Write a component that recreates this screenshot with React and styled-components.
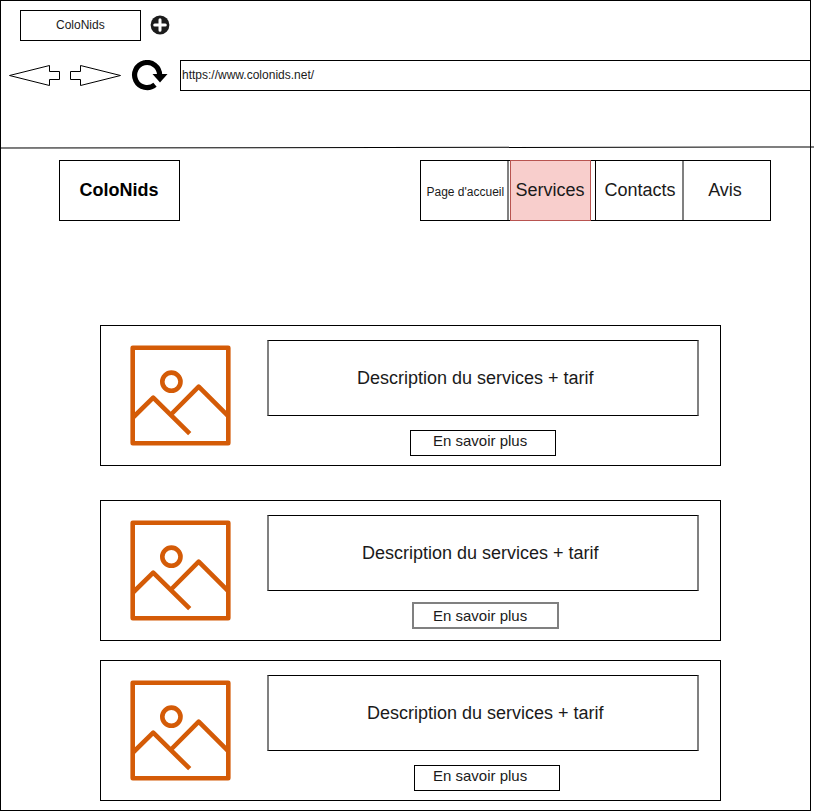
import React from "react";
import styled, { createGlobalStyle } from "styled-components";

const GlobalStyle = createGlobalStyle`
  *, *::before, *::after { box-sizing: border-box; }
  body {
    margin: 0;
    background: #fff;
    color: #1a1a1a;
    font-family: "Liberation Sans", Arial, Helvetica, sans-serif;
  }
  svg { display: block; flex: none; }
`;

const Window = styled.div`
  width: 811px;
  height: 811px;
  border: 1px solid #000;
`;

const TabBar = styled.div`
  display: flex;
  align-items: flex-start;
  gap: 9px;
  padding: 9px 0 0 19px;
`;

const Tab = styled.div`
  width: 121px;
  height: 31px;
  border: 1px solid #000;
  padding: 7px 0 0 35px;
  font-size: 12px;
  line-height: 14px;
`;

const AddTab = styled.div`
  padding-top: 5px;
`;

const Toolbar = styled.div`
  display: flex;
  height: 50px;
  padding-top: 19px;
`;

const AddressBar = styled.div`
  flex: 1;
  height: 31px;
  border: 1px solid #000;
  border-right: 0;
  padding: 7px 0 0 1px;
  font-size: 12px;
  line-height: 14px;
`;

const Divider = styled.div`
  width: 813px;
  height: 1px;
  margin: 56px 0 12px;
  background: #000;
  transform: rotate(-0.07deg);
`;

const Header = styled.header`
  display: flex;
  justify-content: space-between;
  height: 61px;
  padding: 0 39px 0 58px;
`;

const Brand = styled.div`
  width: 121px;
  border: 1px solid #000;
  padding: 19px 0 0 19.5px;
  color: #000;
  font-size: 18px;
  line-height: 20px;
  font-weight: bold;
`;

const Nav = styled.nav`
  display: flex;
  width: 351px;
  border: 1px solid #000;
`;

const NavItem = styled.div`
  width: ${(p) => p.$width}px;
  padding: ${(p) => (p.$small ? 24 : 19)}px 0 0 ${(p) => p.$indent}px;
  border: 0 solid #808080;
  border-right-width: ${(p) => (p.$ruled ? 2 : 0)}px;
  font-size: ${(p) => (p.$small ? 12 : 18)}px;
  line-height: ${(p) => (p.$small ? 14 : 20)}px;
  white-space: nowrap;
`;

const ActiveItem = styled(NavItem)`
  margin: -1px 4px -1px 1px;
  padding-top: 19px;
  border: 1px solid #b85450;
  background: #f8cecc;
`;

const EdgedItem = styled(NavItem)`
  border-left: 1px solid #000;
`;

const Services = styled.main`
  display: flex;
  flex-direction: column;
  padding: 104px 0 0 99px;
`;

const Card = styled.section`
  display: flex;
  width: 621px;
  height: 141px;
  margin-bottom: ${(p) => p.$after}px;
  border: 1px solid #000;
  padding: 14px 0 0 29px;
`;

const Thumbnail = styled.div`
  padding-top: 5px;
`;

const CardBody = styled.div`
  display: flex;
  flex-direction: column;
  align-items: flex-start;
  margin-left: 35px;
`;

const Description = styled.div`
  width: 432px;
  height: 76px;
  border: solid;
  border-width: 1px 2px;
  border-color: #000 #808080;
  padding: 27px 0 0 ${(p) => p.$indent}px;
  font-size: 18px;
  line-height: 20px;
`;

const MoreButton = styled.button`
  width: ${(p) => (p.$soft ? 147 : 146)}px;
  height: ${(p) => (p.$soft ? 27 : 26)}px;
  margin: ${(p) => (p.$soft ? 11 : 14)}px 0 0 ${(p) => p.$offset}px;
  border: ${(p) => (p.$soft ? "2px solid #808080" : "1px solid #000")};
  padding: 0 0 ${(p) => (p.$soft ? 0 : 5)}px ${(p) => p.$indent}px;
  background: #fff;
  color: inherit;
  font-family: inherit;
  font-size: 15px;
  line-height: 17px;
  text-align: left;
`;

const PlusIcon = () => (
  <svg width="20" height="20" viewBox="0 0 20 20">
    <circle cx="10" cy="10" r="9.4" fill="#1c1c1c" />
    <path d="M10 4.7v10.6M4.7 10h10.6" stroke="#fff" strokeWidth="3" strokeLinecap="round" />
  </svg>
);

const NavigationIcons = () => (
  <svg width="179" height="31" viewBox="1 60 179 31">
    <g fill="none" stroke="#000" strokeMiterlimit="10">
      <path d="M59.5 71.5V79.5H49.5V85.5L9.5 75.5L49.5 65.5V71.5Z" />
      <path d="M70.5 71.5V79.5H80.5V85.5L120.5 75.5L80.5 65.5V71.5Z" />
    </g>
    <path d="M159.6 75A12.5 12.5 0 1 0 155 84.7" fill="none" stroke="#000" strokeWidth="5.2" />
    <path d="M152.5 74H167.5L160 82.6Z" />
  </svg>
);

const PictureIcon = () => (
  <svg width="102" height="102" viewBox="130 345 102 102">
    <g fill="none" stroke="#d45b07" strokeWidth="4.6" strokeLinejoin="round">
      <rect x="132.7" y="347.7" width="95.6" height="95.6" />
      <circle cx="171.4" cy="381.7" r="9.1" />
      <path d="M133 417.5L153.2 397.7L189.7 433.7M171.5 414L198.7 386.6L228.5 416.4" />
    </g>
  </svg>
);

const services = [
  { after: 34, textIndent: 88, offset: 143, labelIndent: 22 },
  { after: 19, textIndent: 93, offset: 145, labelIndent: 19, soft: true },
  { after: 0, textIndent: 98, offset: 147, labelIndent: 18 },
];

export default function App() {
  return (
    <>
      <GlobalStyle />
      <Window>
        <TabBar>
          <Tab>ColoNids</Tab>
          <AddTab><PlusIcon /></AddTab>
        </TabBar>
        <Toolbar>
          <NavigationIcons />
          <AddressBar>https://www.colonids.net/</AddressBar>
        </Toolbar>
        <Divider />
        <Header>
          <Brand>ColoNids</Brand>
          <Nav>
            <NavItem $small $width={88} $indent={5.5} $ruled>Page d'accueil</NavItem>
            <ActiveItem $width={81} $indent={4.6}>Services</ActiveItem>
            <EdgedItem $width={89} $indent={8.4} $ruled>Contacts</EdgedItem>
            <NavItem $width={86} $indent={24.2}>Avis</NavItem>
          </Nav>
        </Header>
        <Services>
          {services.map((s, i) => (
            <Card key={i} $after={s.after}>
              <Thumbnail><PictureIcon /></Thumbnail>
              <CardBody>
                <Description $indent={s.textIndent}>Description du services + tarif</Description>
                <MoreButton $soft={s.soft} $offset={s.offset} $indent={s.labelIndent}>
                  En savoir plus
                </MoreButton>
              </CardBody>
            </Card>
          ))}
        </Services>
      </Window>
    </>
  );
}
